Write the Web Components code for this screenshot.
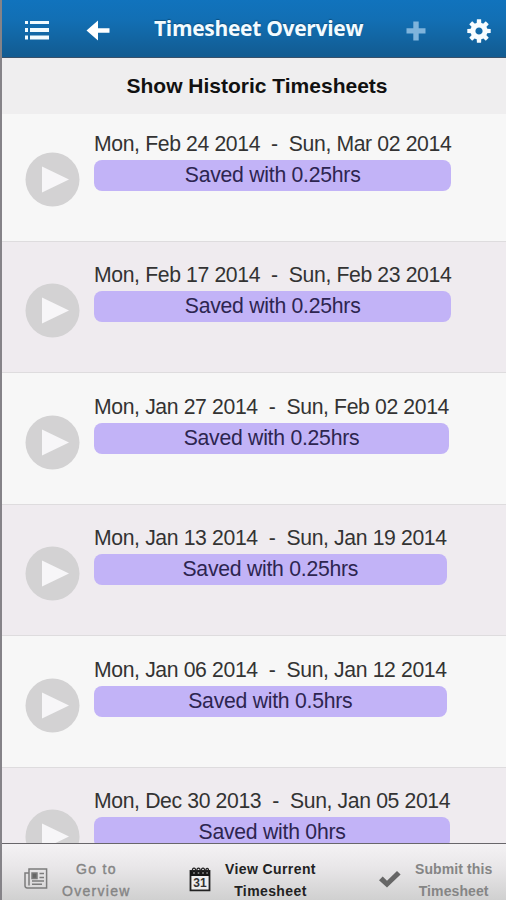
<!DOCTYPE html>
<html lang="en">
<head>
<meta charset="utf-8">
<title>Timesheet Overview</title>
<style>
  html, body { height: 100%; }
  body {
    margin: 0;
    overflow: hidden;
    background: #f7f7f7;
    font-family: "Liberation Sans", Arial, sans-serif;
  }
</style>
</head>
<body>
<timesheet-app></timesheet-app>

<script>
const ICONS = {
  list: `<svg width="24" height="21" viewBox="0 0 24 21" fill="#f2fbff">
    <path d="M0 1h3v3H0zM5 1h19v3H5zM0 8h3v4H0zM5 8h19v4H5zM0 15.5h3v4H0zM5 15.5h19v4H5z"/></svg>`,
  back: `<svg width="24" height="21" viewBox="0 0 24 21" fill="#fff">
    <path d="M0.5 10.5L12 0.5V8.2H23.5V12.8H12V20.5z"/></svg>`,
  plus: `<svg width="20" height="20" viewBox="0 0 20 20" fill="#7fb4dc">
    <path d="M7.3 0.5h5.4v6.8h6.8v5.2h-6.8v7H7.3v-7H0.5V7.3h6.8z"/></svg>`,
  gear: `<svg width="24" height="24" viewBox="-12 -12 24 24">
    <g fill="#f8fcff">
      <path id="t" d="M-2.3 -7L-2.1 -11.7H2.1L2.3 -7z"/>
      <use href="#t" transform="rotate(45)"/><use href="#t" transform="rotate(90)"/>
      <use href="#t" transform="rotate(135)"/><use href="#t" transform="rotate(180)"/>
      <use href="#t" transform="rotate(225)"/><use href="#t" transform="rotate(270)"/>
      <use href="#t" transform="rotate(315)"/>
    </g>
    <circle r="6.1" fill="none" stroke="#f8fcff" stroke-width="5"/></svg>`,
  news: `<svg width="24" height="22" viewBox="0 0 24 22" fill="none" stroke="#7c7c7c" stroke-width="1.5">
    <path d="M5 1H22.6V20H3.2C1.8 20 1 19 1 17.6V5H5zM5 5V17.5"/>
    <path d="M8 5h5v5.5H8z" fill="#666"/>
    <path d="M15.5 5.5h4.5M15.5 9.5h4.5M8 13h12M8 16.3h10"/></svg>`,
  calendar: `<svg width="22" height="25" viewBox="0 0 22 25">
    <path d="M1.5 4H20.5V23.3H1.5z" fill="#eee" stroke="#222" stroke-width="1.8"/>
    <path d="M1 4H21V9H1z" fill="#161616"/>
    <path d="M3.5 5V2.2q1.5-2 3 0V5M8 5V2.2q1.5-2 3 0V5M12.5 5V2.2q1.5-2 3 0V5M17 5V2.2q1.2-1.8 2.4 0V5" fill="none" stroke="#222" stroke-width="1.2"/>
    <path d="M4.2 6h1.6M8.7 6h1.6M13.2 6h1.6M17.4 6h1.4" stroke="#ddd" stroke-width="1.2"/>
    <text x="11" y="20.3" text-anchor="middle" font-family="Liberation Sans" font-weight="bold" font-size="12" letter-spacing="0" fill="#333">31</text></svg>`,
  check: `<svg width="24" height="19" viewBox="0 0 24 19" fill="#666">
    <path d="M1 10.2L4.7 6.6L9 10.7L19 1L22.6 4.4L9 17.6z"/></svg>`,
  play: `<svg width="55" height="55" viewBox="0 0 55 55">
    <circle cx="27.5" cy="27.5" r="27" fill="#d3d2d3"/>
    <path d="M17 14.5L44 27.5L17 40.5z" fill="#f7f6f8"/></svg>`
};

class AppIcon extends HTMLElement {
  connectedCallback() {
    this.attachShadow({ mode: 'open' }).innerHTML = `
      <style>
        :host { display: block; flex: none; }
        svg { display: block; }
      </style>
      ${ICONS[this.getAttribute('name')]}
    `;
  }
}
customElements.define('app-icon', AppIcon);

class AppHeader extends HTMLElement {
  connectedCallback() {
    this.attachShadow({ mode: 'open' }).innerHTML = `
      <style>
        :host {
          display: grid;
          grid-template-columns: 62px 62px 1fr 62px 56px;
          align-items: center;
          box-sizing: border-box;
          height: 58px;
          padding: 4px 0 0 3px;
          background: linear-gradient(#1173bd, #126fb4 35%, #125c92 97%);
          border-bottom: 1px solid #38516a;
        }
        app-icon { justify-self: center; }
        .list { margin-left: 2px; }
        .plus { margin-right: 6px; }
        .gear { margin-left: 2px; }
        h1 {
          margin: 0 0 6px;
          text-align: center;
          white-space: nowrap;
          color: #f3fbff;
          font: bold 21px/26px "Open Sans", sans-serif;
          letter-spacing: -0.3px;
          text-shadow: 0 -1px 1px #0b4f80;
        }
      </style>
      <app-icon class="list" name="list"></app-icon>
      <app-icon class="back" name="back"></app-icon>
      <h1><slot></slot></h1>
      <app-icon class="plus" name="plus"></app-icon>
      <app-icon class="gear" name="gear"></app-icon>
    `;
  }
}
customElements.define('app-header', AppHeader);

class HistoryButton extends HTMLElement {
  connectedCallback() {
    this.attachShadow({ mode: 'open' }).innerHTML = `
      <style>
        :host {
          display: block;
          height: 56px;
          padding-left: 6px;
          background: #efeeef;
          color: #111;
          text-align: center;
          font-size: 21px;
          font-weight: bold;
          line-height: 56px;
        }
      </style>
      <slot></slot>
    `;
  }
}
customElements.define('history-button', HistoryButton);

class TimesheetRow extends HTMLElement {
  connectedCallback() {
    this.attachShadow({ mode: 'open' }).innerHTML = `
      <style>
        :host {
          display: flex;
          align-items: flex-start;
          flex: none;
          box-sizing: border-box;
          height: 131.4px;
          padding: 19.4px 0 0 23px;
          gap: 14px;
          border-bottom: 1px solid #dedcde;
          background: #f7f7f7;
          color: #333;
          font-size: 21.2px;
        }
        :host(:nth-child(even)) { background: #efebef; }
        :host(:first-child) { height: 128px; padding-top: 16.4px; }
        app-icon { margin-top: 22px; }
        .date {
          height: 30px;
          line-height: 27px;
          white-space: pre;
          letter-spacing: -0.37px;
        }
        .status {
          height: 31px;
          line-height: 29px;
          border-radius: 8px;
          background: #c2b3f7;
          color: #2d2550;
          text-align: center;
          letter-spacing: -0.25px;
        }
      </style>
      <app-icon name="play"></app-icon>
      <div class="sheet">
        <div class="date">${this.getAttribute('from')}  -  ${this.getAttribute('to')}</div>
        <div class="status"><slot></slot></div>
      </div>
    `;
  }
}
customElements.define('timesheet-row', TimesheetRow);

class FooterTab extends HTMLElement {
  connectedCallback() {
    this.attachShadow({ mode: 'open' }).innerHTML = `
      <style>
        :host {
          display: flex;
          align-items: center;
          color: #858585;
          font-size: 14px;
          font-weight: bold;
          line-height: 22px;
          text-align: center;
          letter-spacing: 0.4px;
        }
        :host([active]) { color: #222; }
        app-icon { margin-top: -2px; }
      </style>
      <app-icon name="${this.getAttribute('icon')}"></app-icon>
      <span><slot></slot></span>
    `;
  }
}
customElements.define('footer-tab', FooterTab);

class AppFooter extends HTMLElement {
  connectedCallback() {
    this.attachShadow({ mode: 'open' }).innerHTML = `
      <style>
        :host {
          display: grid;
          grid-template-columns: 165px 189px 1fr;
          flex: none;
          box-sizing: border-box;
          height: 57px;
          padding: 14px 0 0 22px;
          border-top: 1px solid #68666a;
          background: linear-gradient(#f4f2f4, #e9e7e9 40%, #d0d0d0);
        }
        ::slotted(footer-tab) { height: 44px; }
      </style>
      <slot></slot>
    `;
  }
}
customElements.define('app-footer', AppFooter);

class TimesheetApp extends HTMLElement {
  connectedCallback() {
    this.attachShadow({ mode: 'open' }).innerHTML = `
      <style>
        :host {
          display: flex;
          flex-direction: column;
          box-sizing: border-box;
          height: 900px;
          border-left: 2px solid #858388;
        }
        app-header, history-button { flex: none; }
        .rows {
          display: flex;
          flex-direction: column;
          flex: 1;
          min-height: 0;
          overflow: hidden;
        }
        footer-tab { gap: 14px; }
        .overview { letter-spacing: 1.3px; font-weight: normal; -webkit-text-stroke: 0.4px; }
        .submit { gap: 13px; letter-spacing: 0.1px; }
      </style>
      <app-header>Timesheet Overview</app-header>
      <history-button>Show Historic Timesheets</history-button>
      <div class="rows">
        <timesheet-row from="Mon, Feb 24 2014" to="Sun, Mar 02 2014">Saved with 0.25hrs</timesheet-row>
        <timesheet-row from="Mon, Feb 17 2014" to="Sun, Feb 23 2014">Saved with 0.25hrs</timesheet-row>
        <timesheet-row from="Mon, Jan 27 2014" to="Sun, Feb 02 2014">Saved with 0.25hrs</timesheet-row>
        <timesheet-row from="Mon, Jan 13 2014" to="Sun, Jan 19 2014">Saved with 0.25hrs</timesheet-row>
        <timesheet-row from="Mon, Jan 06 2014" to="Sun, Jan 12 2014">Saved with 0.5hrs</timesheet-row>
        <timesheet-row from="Mon, Dec 30 2013" to="Sun, Jan 05 2014">Saved with 0hrs</timesheet-row>
      </div>
      <app-footer>
        <footer-tab class="overview" icon="news">Go to<br>Overview</footer-tab>
        <footer-tab icon="calendar" active>View Current<br>Timesheet</footer-tab>
        <footer-tab class="submit" icon="check">Submit this<br>Timesheet</footer-tab>
      </app-footer>
    `;
  }
}
customElements.define('timesheet-app', TimesheetApp);
</script>
</body>
</html>
